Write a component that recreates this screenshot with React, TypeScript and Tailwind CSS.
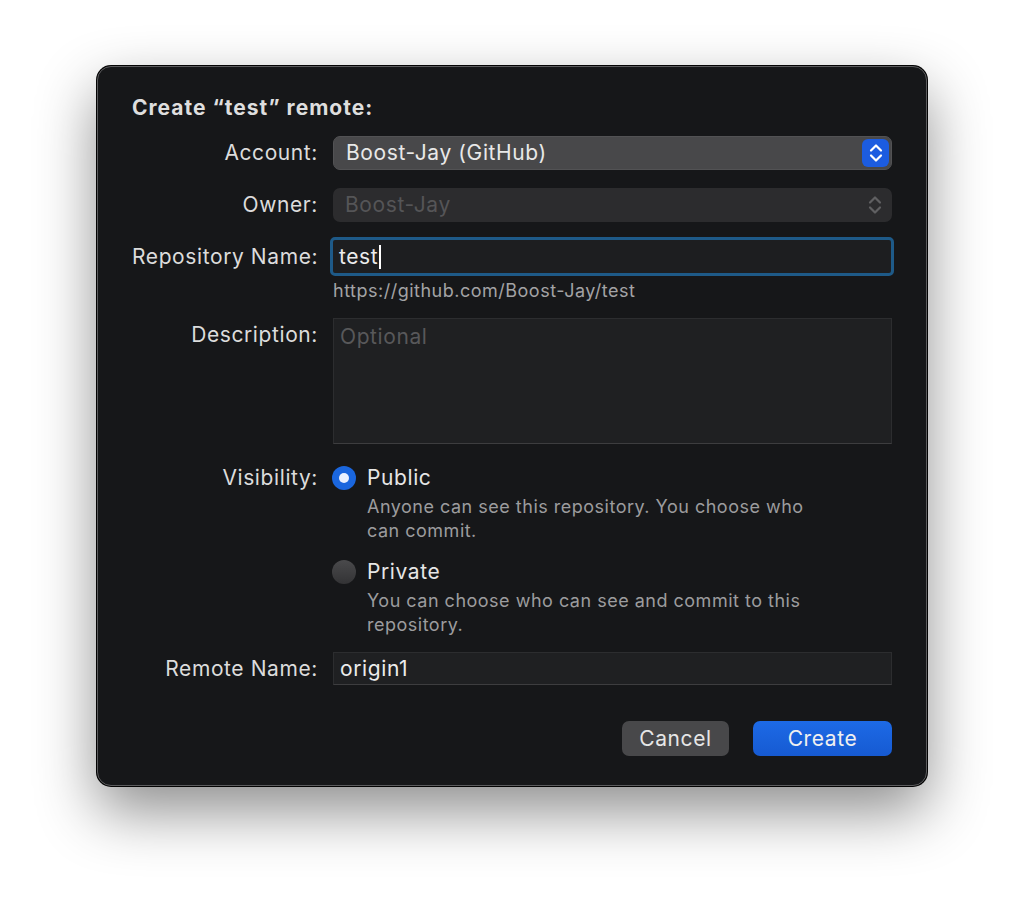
import React from "react";

const font = { fontFamily: "Inter, 'Noto Sans', 'Liberation Sans', sans-serif" };

function Chevrons({ color }: { color: string }) {
  return (
    <svg width="16" height="22" viewBox="0 0 16 22" fill="none">
      <path d="M3 8.5 L8 3.5 L13 8.5" stroke={color} strokeWidth="2.2" strokeLinecap="round" strokeLinejoin="round" />
      <path d="M3 13.5 L8 18.5 L13 13.5" stroke={color} strokeWidth="2.2" strokeLinecap="round" strokeLinejoin="round" />
    </svg>
  );
}

function Row({
  label,
  children,
  className = "",
  labelClass = "leading-[34px]",
}: {
  label?: string;
  children: React.ReactNode;
  className?: string;
  labelClass?: string;
}) {
  return (
    <div className={`flex ${className}`}>
      <div className={`w-[186px] shrink-0 text-right text-[21px] tracking-[0.6px] text-[#dcdcdc] whitespace-nowrap ${labelClass}`}>
        {label}
      </div>
      <div className="ml-[15px] flex-1 min-w-0">{children}</div>
    </div>
  );
}

function Radio({ checked }: { checked: boolean }) {
  if (checked) {
    return (
      <div className="w-[24px] h-[24px] rounded-full bg-[#1a66de] flex items-center justify-center shrink-0">
        <div className="w-[10px] h-[10px] rounded-full bg-[#eaf1ff]" />
      </div>
    );
  }
  return <div className="w-[24px] h-[24px] rounded-full bg-gradient-to-b from-[#4a4a4c] to-[#333335] shrink-0" />;
}

export default function App() {
  return (
    <div className="w-[1024px] h-[915px] bg-white overflow-hidden pt-[66px] pl-[97px]" style={font}>
      <div className="w-[830px] h-[720px] rounded-[14px] bg-[#161719] border border-[#5c5c5e] shadow-[0_25px_60px_rgba(0,0,0,0.45),0_0_0_1px_#050505] px-[34px] pt-[26px]">
        <div className="text-[21px] tracking-[1px] font-bold text-[#dedede] leading-[30px]">Create “test” remote:</div>

        <Row label="Account:" className="mt-[13px]">
          <div className="h-[34px] rounded-[7px] bg-[#48484a] border border-[#525254] flex items-center pl-[12px] pr-[2px]">
            <span className="flex-1 text-[21px] tracking-[0.6px] text-[#e8e8e8]">Boost-Jay (GitHub)</span>
            <div className="w-[27px] h-[28px] rounded-[6px] bg-[#1c5ce0] flex items-center justify-center">
              <Chevrons color="#ffffff" />
            </div>
          </div>
        </Row>

        <Row label="Owner:" className="mt-[18px]">
          <div className="h-[34px] rounded-[7px] bg-[#2c2c2e] flex items-center pl-[12px] pr-[9px]">
            <span className="flex-1 text-[21px] tracking-[0.6px] text-[#555557]">Boost-Jay</span>
            <Chevrons color="#606062" />
          </div>
        </Row>

        <Row label="Repository Name:" className="mt-[15px]" labelClass="leading-[39px]">
          <div className="-ml-[3px] -mr-[2px] rounded-[5px] border-[3px] border-[#1e5a88] bg-[#1d1e20] h-[39px] flex items-center pl-[6px]">
            <span className="text-[21px] tracking-[0.6px] text-[#ececec]">test</span>
            <span className="w-[1.5px] h-[24px] bg-white ml-[1px]" />
          </div>
        </Row>

        <Row>
          <div className="text-[18px] tracking-[0.5px] text-[#a3a3a5] leading-[30px]">https://github.com/Boost-Jay/test</div>
        </Row>

        <Row label="Description:" className="mt-[12px]">
          <div className="h-[126px] bg-[#1f2022] border border-[#2c2d2f] border-b-[#3d3d3f] pl-[6px] pt-[1px]">
            <span className="text-[21px] tracking-[0.6px] text-[#58585a] leading-[34px]">Optional</span>
          </div>
        </Row>

        <Row label="Visibility:" className="mt-[17px]">
          <div className="-ml-[1px]">
            <div className="flex items-center h-[34px]">
              <Radio checked />
              <span className="ml-[11px] text-[21px] tracking-[0.6px] text-[#e6e6e6]">Public</span>
            </div>
            <div className="ml-[35px] w-[445px] text-[18px] tracking-[0.5px] leading-[24px] text-[#9c9c9e]">
              Anyone can see this repository. You choose who can commit.
            </div>
            <div className="flex items-center h-[34px] mt-[12px]">
              <Radio checked={false} />
              <span className="ml-[11px] text-[21px] tracking-[0.6px] text-[#e6e6e6]">Private</span>
            </div>
            <div className="ml-[35px] w-[445px] text-[18px] tracking-[0.5px] leading-[24px] text-[#9c9c9e]">
              You can choose who can see and commit to this repository.
            </div>
          </div>
        </Row>

        <Row label="Remote Name:" className="mt-[15px]">
          <div className="h-[33px] bg-[#1f2022] border border-[#2c2d2f] border-b-[#3d3d3f] flex items-center pl-[6px]">
            <span className="text-[21px] tracking-[0.6px] text-[#ececec]">origin1</span>
          </div>
        </Row>

        <div className="flex justify-end mt-[35px]">
          <button className="w-[107px] h-[35px] rounded-[7px] bg-[#48484a] text-[21px] tracking-[0.6px] text-[#e6e6e6]">Cancel</button>
          <button className="ml-[24px] w-[139px] h-[35px] rounded-[7px] bg-gradient-to-b from-[#1d6ae6] to-[#165ad2] text-[21px] tracking-[0.6px] text-[#f0f0f0]">Create</button>
        </div>
      </div>
    </div>
  );
}
